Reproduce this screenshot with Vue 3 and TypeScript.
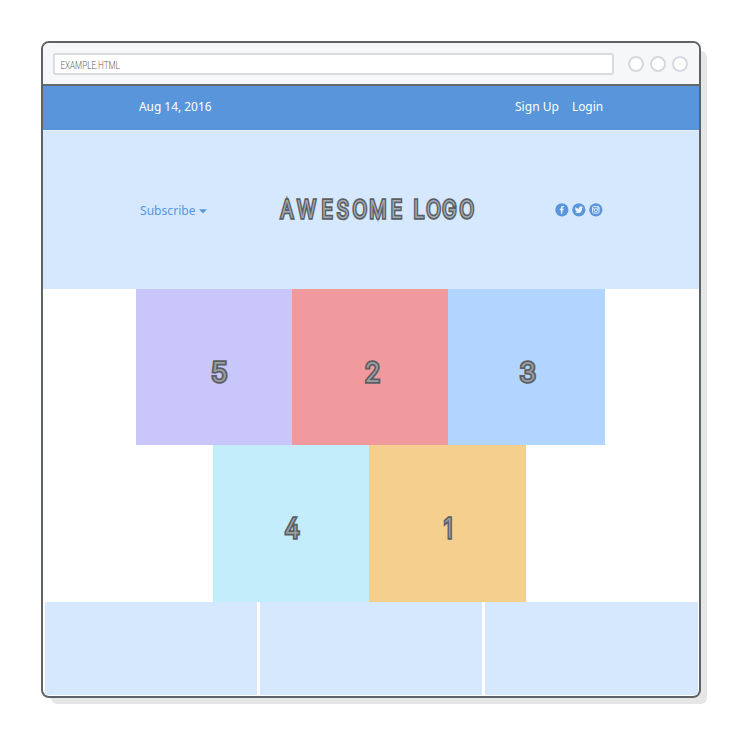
<script setup lang="ts">
interface Tile { digit: string; tone: string; width: number; x: number }

const logoStretch = 0.8
const logoStops = [3.4, 20.3, 44.5, 59.7, 75.5, 92.3, 113.8, 129, 136.6, 149.3, 165.3, 182.6]
const logoX = logoStops.map((x) => x / logoStretch).join(' ')

const upper: Tile[] = [
  { digit: '5', tone: 'violet', width: 16.5, x: 75 },
  { digit: '2', tone: 'red', width: 16, x: 72.5 },
  { digit: '3', tone: 'blue', width: 16.5, x: 71.5 },
]
const lower: Tile[] = [
  { digit: '4', tone: 'cyan', width: 15.5, x: 71.5 },
  { digit: '1', tone: 'amber', width: 8.5, x: 75 },
]
</script>

<template>
  <main class="stage">
    <section class="window">
      <header class="chrome">
        <div class="address">
          <svg class="url" width="64" height="14"><text x="0.4" y="11" textLength="59.5" lengthAdjust="spacingAndGlyphs">EXAMPLE.HTML</text></svg>
        </div>
        <div class="controls"><i></i><i></i><i></i></div>
      </header>
      <nav class="topbar">
        <svg class="label" width="76" height="24"><text x="0" y="15.5" textLength="72.5" lengthAdjust="spacingAndGlyphs">Aug 14, 2016</text></svg>
        <div class="account">
          <svg class="label" width="44" height="24"><text x="0" y="15.5" textLength="44" lengthAdjust="spacingAndGlyphs">Sign Up</text></svg>
          <svg class="label" width="32" height="24"><text x="0" y="15.5" textLength="31" lengthAdjust="spacingAndGlyphs">Login</text></svg>
        </div>
      </nav>
      <div class="masthead">
        <div class="subscribe">
          <svg class="label" width="56" height="24"><text x="0" y="17" textLength="55.5" lengthAdjust="spacingAndGlyphs">Subscribe</text></svg>
          <svg class="caret" width="8" height="5" viewBox="0 0 8 5"><path d="M.8.3h6.4q.7 0 .2.6L4.5 3.8q-.5.5-1 0L.6.9Q.1.3.8.3z" /></svg>
        </div>
        <svg class="logo" width="200" height="40"><text :x="logoX" y="28.5" :transform="`scale(${logoStretch} 1)`">AWESOME LOGO</text></svg>
        <div class="social">
          <svg viewBox="0 0 14 14"><circle cx="7" cy="7" r="6.8" /><path class="mark" d="M6 11V7.5H4.9V6H6V5q0-2 1.9-2h1.2v1.4h-.8q-.7 0-.7.7V6H9l-.2 1.5H7.6V11z" /></svg>
          <svg viewBox="0 0 14 14"><circle cx="7" cy="7" r="6.8" /><path class="mark" d="M3.4 4q1.5 1.8 3.6 1.8Q6.7 3.5 8.7 3.4q.8 0 1.3.5l1-.4-.5 1 .8-.2-.9 1q0 5-4.6 5.2-1.5 0-2.8-.8 1.4.1 2.3-.7-1.3-.1-1.6-1.2h.7q-1.3-.5-1.3-1.7l.7.2Q2.9 5.3 3.4 4z" /></svg>
          <svg viewBox="0 0 14 14"><circle cx="7" cy="7" r="6.8" /><rect class="frame" x="3.7" y="3.7" width="6.6" height="6.6" rx=".8" /><path class="frame" d="M3.7 6h1.6M8.7 6h1.6" /><circle class="frame" cx="7" cy="7.2" r="1.6" /><path class="mark" d="M8.5 4h1.4v1.4H8.5z" /></svg>
        </div>
      </div>
      <div class="board">
        <div class="row">
          <div v-for="t in upper" :key="t.digit" class="tile" :class="t.tone">
            <svg class="digit" width="156" height="156"><text :x="t.x" y="92.5" :textLength="t.width" lengthAdjust="spacingAndGlyphs">{{ t.digit }}</text></svg>
          </div>
        </div>
        <div class="row">
          <div v-for="t in lower" :key="t.digit" class="tile" :class="t.tone">
            <svg class="digit" width="156" height="156"><text :x="t.x" y="92.5" :textLength="t.width" lengthAdjust="spacingAndGlyphs">{{ t.digit }}</text></svg>
          </div>
        </div>
      </div>
      <footer class="columns"><div></div><div></div><div></div></footer>
    </section>
  </main>
</template>

<style>
body { background: #fff; }
</style>

<style scoped>
.stage { box-sizing: border-box; width: 738px; height: 736px; padding: 40.8px 0 0 41.3px; overflow: hidden; }
.window { box-sizing: border-box; width: 660px; height: 657px; border: 2px solid #5f6368; border-radius: 8px; overflow: hidden; background: #fff; box-shadow: 8px 8px 0 -2px #e6e6e6; }
.chrome { box-sizing: border-box; height: 43px; display: flex; align-items: center; background: #f5f7f9; border-bottom: 2px solid #64676c; padding: 1px 11.5px 0 10px; justify-content: space-between; }
.address { box-sizing: border-box; width: 561px; height: 22px; border: 2px solid #d8dce0; border-radius: 3px; background: #fff; padding: 3.5px 0 0 5px; }
svg { display: block; flex: none; overflow: visible; }
.url text { font: 300 10px Roboto, sans-serif; fill: #5c5f63; }
.controls { display: flex; gap: 6px; }
.controls i { box-sizing: border-box; width: 16px; height: 16px; border: 2px solid #d5d9dd; border-radius: 50%; background: #fff; }
.topbar { box-sizing: border-box; height: 44px; background: #5895db; padding: 9px 95px 0 96px; display: flex; justify-content: space-between; }
.label text { font: 13px "Noto Sans", sans-serif; fill: #fff; }
.account { display: flex; gap: 13px; }
.masthead { box-sizing: border-box; height: 159px; background: #d6e8fe; border-top: 1px solid #e4f0ff; display: flex; align-items: center; padding: 0 97px; }
.subscribe { width: 137px; display: flex; align-items: center; gap: 3px; }
.subscribe .label text { fill: #5895db; }
.caret { margin-top: 4px; fill: #5895db; }
.logo text { font: 300 24px Inter, sans-serif; fill: #a3adb6; stroke: #5a5e62; stroke-width: 3.5px; paint-order: stroke; }
.social { display: flex; gap: 3px; margin-left: 78px; }
.social svg { width: 13.7px; height: 13.7px; fill: #5895db; }
.social .mark { fill: #e6f1ff; }
.social .frame { fill: none; stroke: #e6f1ff; stroke-width: 1; }
.board { height: 313px; }
.row { display: flex; justify-content: center; height: 156px; }
.row:first-child { padding-right: 1px; }
.row:last-child { padding-right: 3px; height: 157px; }
.tile { width: 156px; }
.tile:last-child { width: 157px; }
.violet { background: #c9c6fb; }
.red { background: #f09a9d; }
.blue { background: #b1d5ff; }
.cyan { background: #c3edfb; }
.amber { background: #f4cf8e; }
.digit text { font: 300 27px Inter, sans-serif; font-feature-settings: "cv02"; fill: #9a9ea4; stroke: #5a5e62; stroke-width: 3.6px; paint-order: stroke; }
.columns { display: grid; grid-template-columns: 212.5px 221.5px 213px; gap: 3px; height: 93px; padding-left: 1.7px; }
.columns div { background: #d6e8fe; }
</style>
